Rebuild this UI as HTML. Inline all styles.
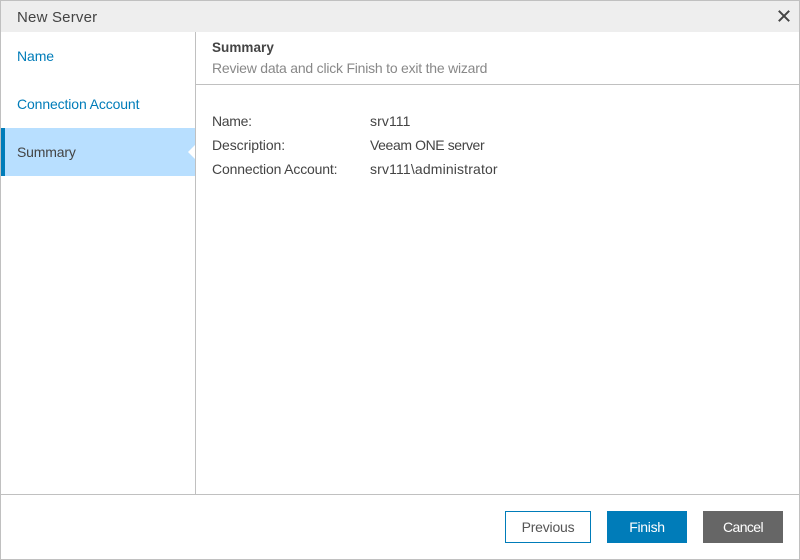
<!DOCTYPE html>
<html><head><meta charset="utf-8">
<style>
html,body{margin:0;padding:0;background:#fff}
body{width:800px;height:560px;position:relative;overflow:hidden;font-family:"Liberation Sans",sans-serif;font-size:14px;color:#444}
.a{position:absolute}
.t{position:absolute;white-space:nowrap;line-height:18px;height:18px}
.btn{position:absolute;top:511px;height:32px;line-height:32px;text-align:center;box-sizing:border-box;font-size:14px}
</style></head><body>
<div class="a" style="left:0;top:0;width:800px;height:560px;box-sizing:border-box;border:1px solid #c0c0c0"></div>
<div class="a" style="left:1px;top:1px;width:798px;height:31px;background:#eee"></div>
<div class="t" style="left:17px;top:9px;font-size:15px;color:#444;letter-spacing:.2px">New Server</div>
<svg class="a" style="left:776px;top:8px" width="17" height="17" viewBox="0 0 17 17"><path d="M2.8 2.8L13.2 13.2M13.2 2.8L2.8 13.2" stroke="#444" stroke-width="2" fill="none"/></svg>

<div class="a" style="left:195px;top:32px;width:1px;height:462px;background:#c0c0c0"></div>
<div class="a" style="left:1px;top:128px;width:194px;height:48px;background:#b8dfff"></div>
<div class="a" style="left:1px;top:128px;width:4px;height:48px;background:#007cb9"></div>
<svg class="a" style="left:188px;top:145px" width="7" height="14" viewBox="0 0 7 14"><path d="M7 0L0 7L7 14Z" fill="#fff"/></svg>
<div class="t" style="left:17px;top:47px;color:#007cb9;letter-spacing:-.1px">Name</div>
<div class="t" style="left:17px;top:95px;color:#007cb9;letter-spacing:-.12px">Connection Account</div>
<div class="t" style="left:17px;top:143px;color:#444;letter-spacing:-.18px">Summary</div>

<div class="t" style="left:212px;top:39px;font-weight:bold;font-size:13.5px;color:#444;letter-spacing:.05px">Summary</div>
<div class="t" style="left:212px;top:59px;color:#888;letter-spacing:-.22px">Review data and click Finish to exit the wizard</div>
<div class="a" style="left:196px;top:84px;width:603px;height:1px;background:#c0c0c0"></div>

<div class="t" style="left:212px;top:112px;letter-spacing:-.3px">Name:</div>
<div class="t" style="left:212px;top:136px;letter-spacing:-.07px">Description:</div>
<div class="t" style="left:212px;top:160px;letter-spacing:-.16px">Connection Account:</div>
<div class="t" style="left:370px;top:112px;letter-spacing:.1px">srv111</div>
<div class="t" style="left:370px;top:136px;letter-spacing:-.4px">Veeam ONE server</div>
<div class="t" style="left:370px;top:160px;letter-spacing:.15px">srv111\administrator</div>

<div class="a" style="left:1px;top:494px;width:798px;height:1px;background:#c0c0c0"></div>
<div class="btn" style="left:505px;width:86px;border:1px solid #007cb9;background:#fff;color:#555;line-height:30px;letter-spacing:-.2px">Previous</div>
<div class="btn" style="left:607px;width:80px;background:#007cb9;color:#fff;letter-spacing:-.3px">Finish</div>
<div class="btn" style="left:703px;width:80px;background:#666;color:#fff;letter-spacing:-.6px">Cancel</div>
</body></html>
